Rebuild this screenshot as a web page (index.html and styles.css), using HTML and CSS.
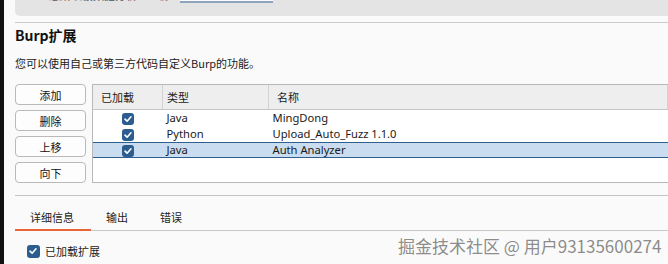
FILE: index.html
```html
<!DOCTYPE html>
<html lang="zh-CN">
<head>
    <meta charset="UTF-8">
    <title>Burp扩展</title>
    <link rel="stylesheet" href="styles.css">
</head>
<body>
    <div class="frame">
        <div class="edge"></div>
        <div class="main">
            <!-- 上一个面板的底部 -->
            <div class="top-panel">
                <div class="top-row">
                    <span class="cut-text">您所以被数据分析</span>
                    <span class="cut-label">编</span>
                    <span class="cut-input"></span>
                </div>
            </div>
            <div class="rule"></div>

            <h2 class="title">Burp扩展</h2>
            <p class="desc">您可以使用自己或第三方代码自定义Burp的功能。</p>

            <div class="ext-area">
                <div class="buttons">
                    <button>添加</button>
                    <button>删除</button>
                    <button>上移</button>
                    <button>向下</button>
                </div>
                <div class="table-box">
                    <table>
                        <thead>
                            <tr>
                                <th class="c1">已加载</th>
                                <th class="c2">类型</th>
                                <th>名称</th>
                            </tr>
                        </thead>
                        <tbody>
                            <tr>
                                <td class="chk"><span class="box"><svg viewBox="0 0 12 12"><path d="M3 6.2 L5.1 8.2 L9 3.8" /></svg></span></td>
                                <td>Java</td>
                                <td>MingDong</td>
                            </tr>
                            <tr>
                                <td class="chk"><span class="box"><svg viewBox="0 0 12 12"><path d="M3 6.2 L5.1 8.2 L9 3.8" /></svg></span></td>
                                <td>Python</td>
                                <td>Upload_Auto_Fuzz 1.1.0</td>
                            </tr>
                            <tr class="selected">
                                <td class="chk"><span class="box"><svg viewBox="0 0 12 12"><path d="M3 6.2 L5.1 8.2 L9 3.8" /></svg></span></td>
                                <td>Java</td>
                                <td>Auth Analyzer</td>
                            </tr>
                        </tbody>
                    </table>
                </div>
            </div>

            <div class="rule rule-low"></div>

            <div class="tabs">
                <span class="tab active">详细信息</span>
                <span class="tab">输出</span>
                <span class="tab">错误</span>
            </div>

            <label class="loaded">
                <span class="box"><svg viewBox="0 0 12 12"><path d="M3 6.2 L5.1 8.2 L9 3.8" /></svg></span>
                已加载扩展
            </label>
        </div>
    </div>

    <div class="watermark">掘金技术社区 @ 用户93135600274</div>
</body>
</html>
```

FILE: styles.css
```css
body {
    margin: 0;
    background: #fafafa;
    font-family: "Noto Sans CJK SC", sans-serif;
    font-size: 11px;
    color: #1a1a1a;
    overflow: hidden;
}

.frame {
    display: flex;
    height: 264px;
}

.edge {
    width: 4px;
    background: #111;
}

.main {
    flex: 1;
    padding-left: 11px;
}

.top-panel {
    height: 16px;
    background: #e4e4e4;
    border-bottom-left-radius: 5px;
    overflow: hidden;
}

.top-row {
    display: flex;
    align-items: center;
    margin-top: -11px;
    height: 12px;
    color: #555;
}

.cut-text {
    margin-left: 34px;
}

.cut-label {
    margin-left: 20px;
}

.cut-input {
    margin-left: 12px;
    width: 93px;
    height: 13px;
    background: #fbfbfb;
    border-bottom: 2px solid #8fa4bd;
}

.rule {
    margin-top: 6px;
    border-top: 1px solid #cbcbcb;
}

.title {
    margin: 2px 0 0;
    font-size: 14px;
    font-weight: bold;
    line-height: 20px;
    color: #111;
}

.desc {
    margin: 10px 0 0;
    font-size: 11px;
    line-height: 16px;
}

.ext-area {
    display: flex;
    gap: 6px;
    margin-top: 13px;
}

.buttons {
    display: flex;
    flex-direction: column;
    gap: 5px;
    width: 71px;
}

.buttons button {
    height: 21px;
    padding: 0;
    border: 1px solid #b9b9b9;
    border-radius: 4px;
    background: #fdfdfd;
    font-family: "Noto Sans CJK SC", sans-serif;
    font-size: 11px;
    color: #111;
}

.table-box {
    flex: 1;
    height: 97px;
    border: 1px solid #b8b8b8;
    border-right: none;
    background: #fff;
}

table {
    width: 100%;
    border-collapse: collapse;
    table-layout: fixed;
}

th {
    height: 24px;
    padding: 0 0 0 8px;
    background: #eeeeee;
    border-bottom: 1px solid #c6c6c6;
    border-right: 1px solid #d2d2d2;
    font-weight: normal;
    text-align: left;
}

th.c1 {
    width: 61px;
}

th.c2 {
    padding-left: 4px;
    width: 101px;
}

td {
    height: 16px;
    padding: 0 0 0 4px;
    line-height: 14px;
    white-space: nowrap;
    font-family: "Noto Sans", sans-serif;
    font-size: 11.2px;
}

td.chk {
    text-align: center;
    padding: 0;
}

tr.selected td {
    background: #c9dcf0;
    border-top: 1px solid #2f5f8e;
    border-bottom: 1px solid #2f5f8e;
    height: 14px;
}

.box {
    display: inline-flex;
    width: 12px;
    height: 12px;
    border-radius: 3px;
    background: #2c5d8f;
    vertical-align: middle;
}

.box svg {
    width: 12px;
    height: 12px;
    fill: none;
    stroke: #fff;
    stroke-width: 1.6;
    stroke-linecap: round;
    stroke-linejoin: round;
}

.rule-low {
    margin-top: 12px;
    border-top-color: #c4c4c4;
}

.tabs {
    display: flex;
    margin-top: 11px;
    border-bottom: 1px solid #c8c8c8;
}

.tab {
    padding: 2px 17px 4px 15px;
    line-height: 16px;
    color: #222;
}

.tab.active {
    border-bottom: 2px solid #e8653a;
    margin-bottom: -1px;
}

.loaded {
    display: flex;
    align-items: center;
    gap: 5px;
    margin: 12px 0 0 12px;
}

.loaded .box {
    width: 13px;
    height: 13px;
}

.watermark {
    position: absolute;
    left: 398px;
    top: 236px;
    font-size: 17px;
    line-height: 20px;
    color: #8c8c8c;
    text-shadow: 0 0 2px #fff, 0 0 1px #fff;
}
```
